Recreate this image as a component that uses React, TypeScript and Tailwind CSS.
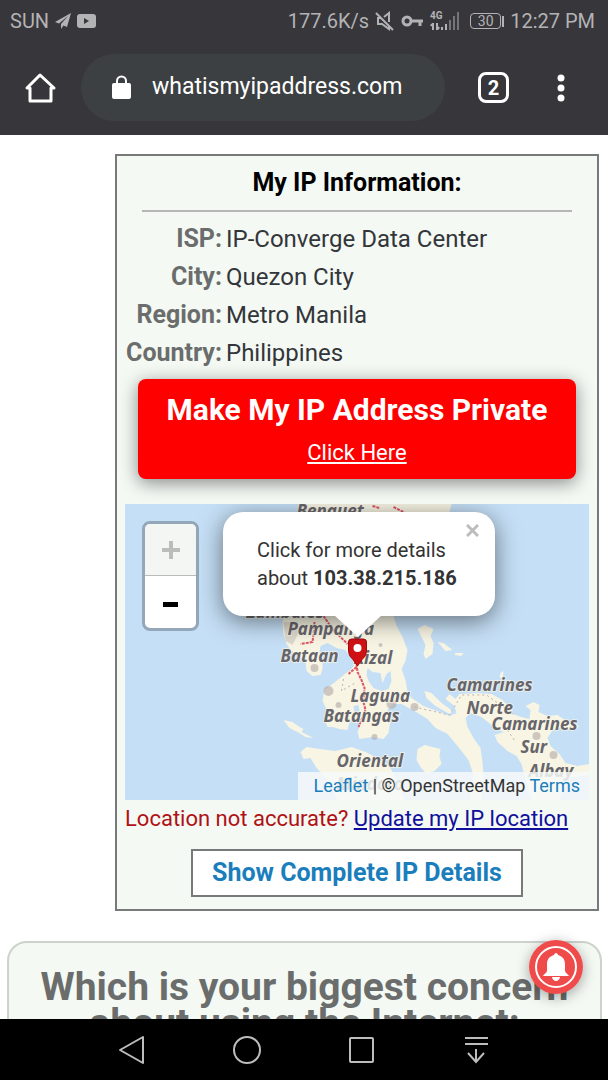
import React from 'react';

const details = [
  { label: 'ISP', value: 'IP-Converge Data Center' },
  { label: 'City', value: 'Quezon City' },
  { label: 'Region', value: 'Metro Manila' },
  { label: 'Country', value: 'Philippines' },
];

const mapLabels = [
  { text: 'Benguet', x: 297, y: 517 },
  { text: 'Zambales', x: 247, y: 618 },
  { text: 'Pampanga', x: 288, y: 635 },
  { text: 'Bataan', x: 281, y: 662 },
  { text: 'Rizal', x: 354, y: 664 },
  { text: 'Laguna', x: 351, y: 702 },
  { text: 'Batangas', x: 324, y: 722 },
  { text: 'Oriental', x: 337, y: 767 },
  { text: 'Mindoro', x: 337, y: 790 },
  { text: 'Camarines', x: 447, y: 691 },
  { text: 'Norte', x: 467, y: 714 },
  { text: 'Camarines', x: 492, y: 730 },
  { text: 'Sur', x: 521, y: 753 },
  { text: 'Albay', x: 529, y: 777 },
];

function StatusBar() {
  return (
    <div className="flex h-[42px] items-center justify-between pl-[10px] pr-[13px] text-xl text-[#b3b3b5]">
      <div className="flex items-center gap-[6px]">
        <span>SUN</span>
        <svg className="h-4 w-4" viewBox="0 0 16 16" fill="currentColor">
          <path d="M16 0 0 9l4 1.500L13 3 6 11v5l2.500-3.500L12 14z" />
        </svg>
        <svg className="h-[14px] w-[19px]" viewBox="0 0 19 14">
          <rect width="19" height="14" rx="3" fill="currentColor" />
          <path d="M7 4v6l5-3z" fill="#37363a" />
        </svg>
      </div>
      <div className="flex items-center gap-[6px]">
        <span>177.6K/s</span>
        <svg className="h-5 w-5" viewBox="0 0 20 20" fill="none" stroke="currentColor" strokeWidth="2">
          <path d="M9 6l5-4v9M6 7H3v6h4l7 5v-3M1 2l17 17" />
        </svg>
        <svg className="h-3 w-[23px]" viewBox="0 0 23 12" fill="none" stroke="currentColor" strokeWidth="3">
          <circle cx="6" cy="6" r="4" />
          <path d="M10 6h12M19 6v5" />
        </svg>
        <svg className="h-5 w-[30px]" viewBox="0 0 30 20" fill="currentColor">
          <text x="0" y="8" fontSize="10" fontWeight="700" fontFamily="Roboto, sans-serif">4G</text>
          <path d="M3 12v7M2 13l-1 2M7 12v7M8 18l1-2" stroke="currentColor" strokeWidth="2" />
          <path d="M11 16h2v3h-2zM15 13h2v6h-2z" />
          <path d="M19 9h2v10h-2zM23 5h2v14h-2zM27 1h2v18h-2z" opacity=".5" />
        </svg>
        <div className="ml-[4px] flex items-center gap-px">
          <span className="flex h-4 w-[31px] items-center justify-center rounded-sm border border-current text-sm">30</span>
          <span className="h-[11px] w-[2px] bg-current" />
        </div>
        <span>12:27 PM</span>
      </div>
    </div>
  );
}

function AddressBar() {
  return (
    <div className="flex h-[93px] items-center pb-[2px] text-white">
      <button aria-label="Home" className="ml-6 mr-[25px] h-8 w-8">
        <svg viewBox="0 0 32 32" fill="none" stroke="currentColor" strokeWidth="3" strokeLinejoin="round" strokeLinecap="round">
          <path d="M16 3 3 16h3v13h21V16h3z" />
        </svg>
      </button>
      <div className="flex h-[67px] flex-1 items-center rounded-full bg-[#3c4043] pl-[31px]">
        <svg className="h-[25px] w-[19px] shrink-0" viewBox="0 0 19 25" fill="none">
          <rect y="8" width="19" height="16" rx="2" fill="currentColor" />
          <path d="M5 9V6a4.500 4.500 0 0 1 9 0v3" stroke="currentColor" strokeWidth="2" />
        </svg>
        <input
          aria-label="Address"
          defaultValue="whatismyipaddress.com"
          className="ml-[21px] w-full min-w-0 bg-transparent text-[23px] outline-none"
        />
      </div>
      <button
        aria-label="Open tabs"
        className="ml-[33px] flex h-[31px] w-[31px] items-center justify-center rounded-lg border-3 border-white text-xl font-bold leading-none"
      >
        2
      </button>
      <button aria-label="Menu" className="ml-[33px] mr-7 flex w-[38px] justify-center">
        <svg className="h-7 w-2" viewBox="0 0 8 28" fill="currentColor">
          <circle cx="4" cy="4" r="3.500" />
          <circle cx="4" cy="14" r="3.500" />
          <circle cx="4" cy="24" r="3.500" />
        </svg>
      </button>
    </div>
  );
}

function LocationMap() {
  return (
    <div className="relative mt-[25px] h-[296px] overflow-hidden bg-[#c5dff6]">
      <svg className="absolute inset-0 h-full w-full" viewBox="125 504 465 296" preserveAspectRatio="xMidYMid slice">
        <g fill="#f8f5e4">
          {/* Luzon and the Bicol peninsula */}
          <path
            d="M303 504L452 504L449 516L430 540L400 580L393 612L397 626L403 637L408 650L406 661L402 669L406 680L408 692L412 698
            L424 706L440 712L450 716L457 713L455 706L446 699L450 694L456 699L460 694L478 693L492 694L503 700L510 707L513 714L522 717
            L530 719L531 710L526 706L534 702L540 705L539 712L548 716L558 715L567 721L580 726L575 730L560 728L553 730L548 738L551 746
            L560 754L566 763L578 766L590 764L590 775L566 778L560 800L532 800L526 780L522 764L517 756L508 751L498 742L495 735L504 732
            L492 725L482 717L471 713L466 718L468 727L474 738L481 748L483 762L484 776L482 800L470 800L474 775L469 760L458 746L448 734
            L436 728L428 719L415 711L402 704L393 704L388 710L391 720L389 733L384 739L373 737L360 739L358 732L361 724L354 719L350 722
            L348 730L340 729L333 727L328 727L325 720L328 711L323 701L325 690L333 684L343 676L352 669L356 663L351 657L346 650L337 648
            L328 643L321 646L320 652L323 660L323 669L321 675L313 676L307 671L306 662L300 655L292 651L287 644L284 634L283 622L285 614L290 600Z"
          />
          {/* Mindoro */}
          <path d="M301 752L307 747L320 749L336 751L352 747L366 752L380 759L391 768L397 780L405 800L338 800L328 780L317 768L311 758L304 759Z" />
          {/* Marinduque and smaller islands */}
          <path d="M418 749l7-4 8 2 8 2-1 7 2 8-7 7-8 3-6-7-4-7z" />
          <path d="M284 720l9 2 7 5 4 2-2 3 8 4 4 2-8-1-8-5-8-4z" />
          <path d="M418 629l7-4 9 4-3 7 3 7-1 11-7 5-2-5 2-9zM438 642l6 1 9 7-7 1zM456 653l8 0-2 3-7-1z" />
          <path d="M425 691l7 2 9 9 12 9-3 3-14-8-9-8z" />
          <path d="M501 673l3-2-1 8-3-2z" />
        </g>
        {/* Lakes */}
        <path d="M368 668l5 4 8 1 2 10 4-9 4-3 1 10-3 8-7 2-8-3-5-7-2-6z" fill="#c5dff6" />
        <path d="M354 706l5-1 1 6-5 2z" fill="#c5dff6" />
        <g fill="#b3aaa9" opacity=".6">
          <circle cx="315" cy="668" r="4" />
          <circle cx="329" cy="691" r="5" />
          <circle cx="339" cy="705" r="3" />
          <circle cx="392" cy="704" r="5" />
          <circle cx="415" cy="707" r="4" />
          <circle cx="375" cy="737" r="3" />
          <circle cx="381" cy="645" r="2" />
          <circle cx="537" cy="736" r="4" />
          <circle cx="554" cy="755" r="4" />
          <path d="M284 622l13 1 2 10-6 12-7-4z" opacity=".6" />
        </g>
        <path
          d="M315 622l-1 12-1 8-12 2M324 616l9 13 8 8 7 7M357 664l1 8 4 8 3 8-1 14 2 8-7 17M357 667l-8 7M373 506l7 2M394 507l10 5"
          fill="none"
          stroke="#dd5664"
          strokeWidth="2"
          strokeDasharray="3 1"
        />
        <path d="M344 679l-2 12 15-9M415 707l35 8 12-20h25l28 20M508 730l8 12" fill="none" stroke="#b9b1b1" strokeDasharray="2 3" />
        <g
          className="fill-[#67656c] stroke-[#f8f5e4]/70"
          strokeWidth="2"
          paintOrder="stroke"
          fontFamily="'Noto Sans', sans-serif"
          fontSize="17"
          fontWeight="700"
          fontStyle="italic"
        >
          {mapLabels.map((l, i) => (
            <text key={i} x={l.x} y={l.y}>
              {l.text}
            </text>
          ))}
        </g>
        <path d="M352 639h12q3 0 3 3v9q0 5-4 8l-5 7-5-7q-4-3-4-8v-9q0-3 3-3z" fill="#cf1116" stroke="#a50b10" />
        <circle cx="358" cy="648" r="4" fill="#fff" />
      </svg>

      {/* Zoom control */}
      <div className="absolute left-[17px] top-[17px] w-[57px] overflow-hidden rounded-lg border-3 border-[#93a7b9] bg-white">
        <button aria-label="Zoom in" className="flex h-[52px] w-full items-center justify-center border-b border-[#bbb] bg-[#f4f6f3]">
          <svg className="h-5 w-5" viewBox="0 0 20 20" stroke="#bcbcbc" strokeWidth="4">
            <path d="M10 1v18M1 10h18" />
          </svg>
        </button>
        <button aria-label="Zoom out" className="flex h-[52px] w-full items-center justify-center">
          <span className="mt-1 h-[5px] w-[15px] bg-black" />
        </button>
      </div>

      {/* Popup */}
      <div className="absolute left-[98px] top-2 h-[104px] w-[272px] rounded-[20px] bg-white pl-[34px] pt-6 text-xl leading-7 text-[#333] shadow-[0_5px_24px_rgba(0,0,0,0.5)]">
        <p>
          Click for more details
          <br />
          about <b>103.38.215.186</b>
        </p>
        <button aria-label="Close popup" className="absolute right-4 top-3 h-[13px] w-[13px]">
          <svg viewBox="0 0 13 13" stroke="#bdbdbd" strokeWidth="3">
            <path d="M1 1l11 11M12 1 1 12" />
          </svg>
        </button>
        <svg className="absolute left-[108px] top-[103px] h-[22px] w-[54px]" viewBox="0 0 54 22" fill="#fff">
          <path d="M3 0h48L27 22z" />
        </svg>
      </div>

      <div className="absolute bottom-0 right-0 bg-[#f6f9f8]/85 pl-4 pr-[9px] text-lg leading-7 text-[#333]">
        <a href="#" className="text-[#1b7ebc]">Leaflet</a> | © OpenStreetMap <a href="#" className="text-[#1b7ebc]">Terms</a>
      </div>
    </div>
  );
}

function IpCard() {
  return (
    <section className="ml-[115px] mr-[9px] mt-[19px] border-2 border-[#77797a] bg-[#f4f9f4] px-2 pb-3">
      <h2 className="mx-[17px] border-b-2 border-[#b4b7b4] pb-[11px] pt-[11px] text-center text-[25px] leading-8 font-bold text-black">
        My IP Information:
      </h2>
      <table className="mt-2">
        <tbody>
          {details.map((d) => (
            <tr key={d.label} className="h-[38px]">
              <th scope="row" className="w-[97px] p-0 text-right text-[25px] leading-7 font-bold text-[#6a6d6c]">{d.label}:</th>
              <td className="p-0 pl-1 text-2xl leading-7 text-[#333639]">{d.value}</td>
            </tr>
          ))}
        </tbody>
      </table>

      <a
        href="#"
        className="mx-[13px] mt-[7px] flex h-[100px] flex-col items-center rounded-lg bg-[#fe0000] pt-[11px] text-white shadow-[0_4px_18px_rgba(0,0,0,0.45)]"
      >
        <span className="whitespace-nowrap text-[30px] leading-10 font-bold">Make My IP Address Private</span>
        <span className="mt-[9px] text-[22px] leading-7 underline">Click Here</span>
      </a>

      <LocationMap />

      <p className="mt-[5px] whitespace-nowrap text-[22px] leading-7 text-[#b01116]">
        Location not accurate? <a href="#" className="text-[#10109c] underline">Update my IP location</a>
      </p>
      <button className="mx-auto mt-4 block h-12 w-[332px] border-2 border-[#77797a] bg-white text-[25px] leading-8 font-bold text-[#1b7ebc]">
        Show Complete IP Details
      </button>
    </section>
  );
}

function NavBar() {
  return (
    <nav className="flex h-[61px] shrink-0 items-center justify-center gap-[83px] bg-black text-[#bdbdbd]">
      <button aria-label="Back" className="h-8 w-8">
        <svg viewBox="0 0 32 32" fill="none" stroke="currentColor" strokeWidth="2" strokeLinejoin="round">
          <path d="M4 16 27 3v26z" />
        </svg>
      </button>
      <button aria-label="Home screen" className="h-8 w-8">
        <svg viewBox="0 0 32 32" fill="none" stroke="currentColor" strokeWidth="2">
          <circle cx="16" cy="16" r="13" />
        </svg>
      </button>
      <button aria-label="Recent apps" className="h-8 w-8">
        <svg viewBox="0 0 32 32" fill="none" stroke="currentColor" strokeWidth="2">
          <rect x="4" y="4" width="23" height="24" rx="1" />
        </svg>
      </button>
      <button aria-label="Notifications" className="h-8 w-8">
        <svg viewBox="0 0 32 32" fill="none" stroke="currentColor" strokeWidth="2">
          <path d="M4 4h23M4 10h23M15 15v13M7 19l8 9 8-9" />
        </svg>
      </button>
    </nav>
  );
}

export default function App() {
  return (
    <div className="flex h-screen flex-col overflow-hidden bg-white font-[Roboto,sans-serif]">
      <header className="shrink-0 bg-[#37363a]">
        <StatusBar />
        <AddressBar />
      </header>

      <main className="relative min-h-0 flex-1 overflow-hidden">
        <IpCard />
        <section className="ml-[7px] mr-[6px] mt-[30px] h-60 rounded-[20px] border-2 border-[#cdd2cd] bg-[#f4f9f4] pt-[26px]">
          <h2 className="text-center text-[39px] leading-9 font-bold text-[#6a6d6c]">
            Which is your biggest concern about using the Internet:
          </h2>
        </section>
        <button
          aria-label="Alerts"
          className="absolute bottom-[25px] right-[25px] h-[54px] w-[54px] rounded-full shadow-[0_3px_14px_rgba(0,0,0,0.35)]"
        >
          <svg viewBox="0 0 54 54">
            <circle cx="27" cy="27" r="27" fill="#ef4b4b" />
            <circle cx="27" cy="27" r="20" fill="none" stroke="#fff" strokeWidth="2" />
            <path d="M27 13c1 0 2 1 2 2 4 1 7 4 7 9v6c0 3 2 3 4 6H14c2-3 4-3 4-6v-6c0-5 3-8 7-9 0-1 1-2 2-2zM23 37h8c0 2-2 4-4 4s-4-2-4-4z" fill="#fff" />
          </svg>
        </button>
      </main>

      <NavBar />
    </div>
  );
}
